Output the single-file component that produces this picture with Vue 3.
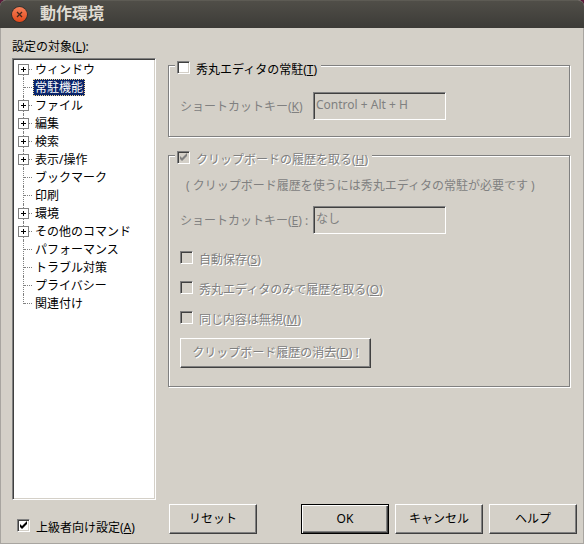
<script setup>
import { ref } from 'vue'

const categories = [
  { name: 'ウィンドウ', branch: true },
  { name: '常駐機能', branch: false },
  { name: 'ファイル', branch: true },
  { name: '編集', branch: true },
  { name: '検索', branch: true },
  { name: '表示/操作', branch: true },
  { name: 'ブックマーク', branch: false },
  { name: '印刷', branch: false },
  { name: '環境', branch: true },
  { name: 'その他のコマンド', branch: true },
  { name: 'パフォーマンス', branch: false },
  { name: 'トラブル対策', branch: false },
  { name: 'プライバシー', branch: false },
  { name: '関連付け', branch: false }
]
const selected = ref('常駐機能')
const resident = ref(false)
const advanced = ref(true)

const historyOptions = [
  { id: 'autosave', label: '自動保存', key: 'S' },
  { id: 'only-here', label: '秀丸エディタのみで履歴を取る', key: 'O' },
  { id: 'ignore-same', label: '同じ内容は無視', key: 'M' }
]
</script>

<template>
  <div class="window">
    <header class="titlebar">
      <button class="close" type="button" aria-label="閉じる">
        <svg viewBox="0 0 17 17" width="17" height="17">
          <defs>
            <linearGradient id="closeFill" x1="0" y1="0" x2="0" y2="1">
              <stop offset="0" stop-color="#f68059" />
              <stop offset="1" stop-color="#e2491b" />
            </linearGradient>
          </defs>
          <circle cx="8.5" cy="8.5" r="8.3" fill="#2f2d29" />
          <circle cx="8.5" cy="8.5" r="7.5" fill="url(#closeFill)" />
          <path d="M6 6l5 5M11 6l-5 5" stroke="#45281c" stroke-width="1.3" />
        </svg>
      </button>
      <h1>動作環境</h1>
    </header>

    <form class="content" @submit.prevent>
      <section class="side">
        <p id="targets" class="caption">設定の対象(<u>L</u>):</p>
        <ul class="tree" role="tree" aria-labelledby="targets">
          <li
            v-for="item in categories"
            :key="item.name"
            class="node"
            role="treeitem"
            :aria-selected="selected === item.name"
            @click="selected = item.name"
          >
            <span class="rail">
              <svg v-if="item.branch" class="plus" viewBox="0 0 11 11" width="11" height="11">
                <rect x="0.5" y="0.5" width="10" height="10" fill="#fff" stroke="#808080" />
                <path d="M3 5.5h5M5.5 3v5" stroke="#000" />
              </svg>
            </span>
            <span class="name" :class="{ selected: selected === item.name }">{{ item.name }}</span>
          </li>
        </ul>
        <label class="check advanced">
          <input v-model="advanced" type="checkbox" />
          <span>上級者向け設定(<u>A</u>)</span>
        </label>
      </section>

      <section class="main">
        <fieldset class="group">
          <legend>
            <label class="check">
              <input v-model="resident" type="checkbox" />
              <span>秀丸エディタの常駐(<u>T</u>)</span>
            </label>
          </legend>
          <div class="field">
            <label for="key-resident">ショートカットキー(<u>K</u>)</label>
            <input id="key-resident" type="text" value="Control + Alt + H" disabled />
          </div>
        </fieldset>

        <fieldset class="group history">
          <legend>
            <label class="check off">
              <input type="checkbox" checked disabled />
              <span>クリップボードの履歴を取る(<u>H</u>)</span>
            </label>
          </legend>
          <p class="note">( クリップボード履歴を使うには秀丸エディタの常駐が必要です )</p>
          <div class="field">
            <label for="key-history">ショートカットキー(<u>E</u>) :</label>
            <input id="key-history" type="text" value="なし" disabled />
          </div>
          <div class="options">
            <label v-for="o in historyOptions" :key="o.id" class="check off">
              <input type="checkbox" disabled />
              <span>{{ o.label }}(<u>{{ o.key }}</u>)</span>
            </label>
          </div>
          <button class="btn wide" type="button" disabled>クリップボード履歴の消去(<u>D</u>) !</button>
        </fieldset>

        <footer class="actions">
          <button class="btn reset" type="reset">リセット</button>
          <button class="btn default" type="submit">OK</button>
          <button class="btn" type="button">キャンセル</button>
          <button class="btn" type="button">ヘルプ</button>
        </footer>
      </section>
    </form>
  </div>
</template>

<style>
body {
  background: #5a1a3a;
}
</style>

<style scoped>
.window,
.window * {
  box-sizing: border-box;
}
.window {
  display: flex;
  flex-direction: column;
  min-height: 100vh;
  border: 1px solid #a8a5a0;
  border-top: 0;
  border-radius: 6px 6px 0 0;
  background: #d4d0c8;
  color: #000;
  font: 12px/18px "Noto Sans", "Noto Sans CJK JP", sans-serif;
}
button,
input {
  font: inherit;
  color: inherit;
}
.titlebar {
  display: flex;
  align-items: center;
  gap: 12px;
  height: 28px;
  margin: 0 -1px;
  padding: 0 11px;
  border-radius: 6px 6px 0 0;
  border-top: 1px solid #5d5b54;
  background: linear-gradient(#504e48, #3c3b37);
}
.close {
  display: flex;
  padding: 0;
  border: 0;
  background: none;
}
h1 {
  margin: 0;
  padding-bottom: 4px;
  color: #dfdbd2;
  font-size: 16px;
  line-height: 22px;
  font-weight: 700;
}
p {
  margin: 0;
}
.content {
  flex: 1;
  display: grid;
  grid-template-columns: 144px 1fr;
  gap: 12px;
  padding: 10px 6px 9px 11px;
}
.side,
.main {
  display: flex;
  flex-direction: column;
}
.main {
  padding-top: 15px;
}
.caption {
  margin-bottom: 2px;
}
.tree {
  flex: 1;
  margin: 0;
  padding: 1px;
  list-style: none;
  background: #fff;
  border: 1px solid;
  border-color: #808080 #fff #fff #808080;
  box-shadow: inset 1px 1px #404040, inset -1px -1px #d4d0c8;
}
.node {
  display: flex;
  align-items: center;
  height: 18px;
}
.rail {
  position: relative;
  display: flex;
  align-items: center;
  width: 19px;
  height: 18px;
  padding-left: 4px;
}
.rail::before {
  content: "";
  position: absolute;
  left: 9px;
  top: 0;
  bottom: 0;
  border-left: 1px dotted #808080;
}
.rail::after {
  content: "";
  position: absolute;
  left: 10px;
  right: 1px;
  top: 9px;
  border-top: 1px dotted #808080;
}
.node:first-child .rail::before {
  top: 9px;
}
.node:last-child .rail::before {
  bottom: 8px;
}
.plus {
  position: relative;
  z-index: 1;
}
.name {
  height: 17px;
  padding: 0 1px;
  border: 1px solid transparent;
  line-height: 15px;
}
.name.selected {
  background: #0a246a;
  border: 1px dotted #f5db95;
  color: #fff;
}
.check {
  display: flex;
  align-items: flex-start;
  gap: 6px;
  height: 18px;
}
.check span {
  padding-top: 2px;
}
.check input {
  appearance: none;
  flex: none;
  width: 13px;
  height: 13px;
  margin: 2px 0 0;
  border: 1px solid;
  border-color: #808080 #fff #fff #808080;
  box-shadow: inset 1px 1px #404040, inset -1px -1px #d4d0c8;
  background: #fff;
}
.check input:checked {
  background: #fff url("data:image/svg+xml,%3Csvg xmlns='http://www.w3.org/2000/svg' viewBox='0 0 11 11'%3E%3Cpath d='M2 4v3l2 2 5-5V1L4 6z' fill='%23000'/%3E%3C/svg%3E");
}
.check input:disabled {
  background-color: #d4d0c8;
}
.check input:disabled:checked {
  background-image: url("data:image/svg+xml,%3Csvg xmlns='http://www.w3.org/2000/svg' viewBox='0 0 11 11'%3E%3Cpath d='M2 4v3l2 2 5-5V1L4 6z' fill='%23808080'/%3E%3C/svg%3E");
}
.check.off,
.btn:disabled {
  color: #808080;
  text-shadow: 1px 1px #fff, 1px 1px #fff;
}
.advanced {
  height: 17px;
  margin: 17px 0 0 5px;
}
.group {
  min-width: 0;
  margin: 0 7px 0 0;
  padding: 15px 11px 16px;
  border: 1px solid #808080;
  box-shadow: inset 1px 1px #fff, 1px 1px #fff;
}
.group + .group {
  margin-top: 6px;
}
legend {
  margin-left: -5px;
  padding: 6px 4px 0 2px;
  background: #d4d0c8;
}
.field {
  display: flex;
  align-items: center;
  color: #808080;
}
.field label {
  width: 133px;
  padding-top: 2px;
}
.field input {
  width: 133px;
  height: 28px;
  padding: 0 2px 4px;
  border: 1px solid;
  border-color: #808080 #fff #fff #808080;
  box-shadow: inset 1px 1px #404040;
  background: #d4d0c8;
}
.note {
  padding: 0 6px;
  margin-bottom: 11px;
  color: #808080;
}
.history {
  padding-top: 10px;
  padding-bottom: 18px;
}
.options {
  display: flex;
  flex-direction: column;
  align-items: flex-start;
  gap: 12px;
  margin: 15px 0 11px;
}
.btn {
  width: 88px;
  height: 30px;
  padding: 0;
  border: 1px solid;
  border-color: #fff #404040 #404040 #fff;
  box-shadow: inset -1px -1px #808080;
  background: #d4d0c8;
}
.btn.wide {
  display: block;
  width: 191px;
}
.btn.default {
  border-color: #000;
  box-shadow: inset 1px 1px #fff, inset -1px -1px #404040, inset -2px -2px #808080;
}
.actions {
  display: flex;
  gap: 6px;
  margin-top: auto;
  padding-left: 1px;
}
.reset {
  margin-right: auto;
}
</style>
